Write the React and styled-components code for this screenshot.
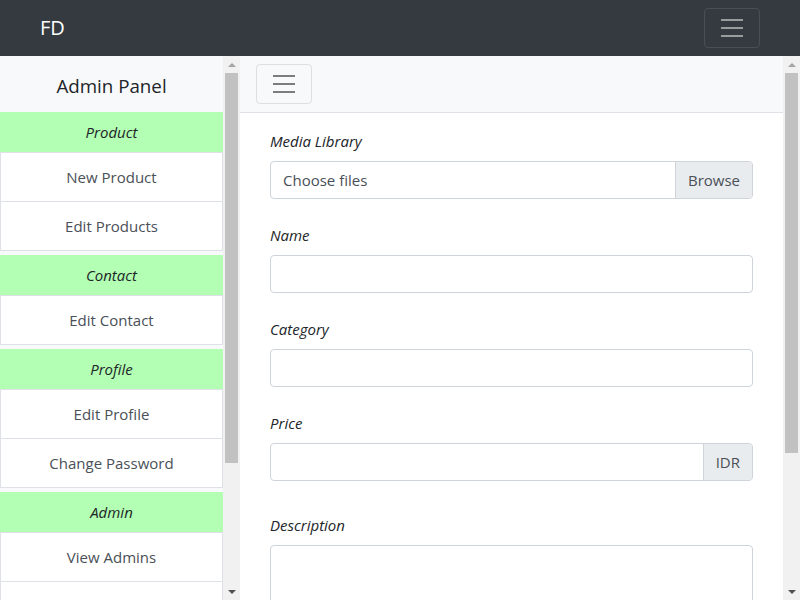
import React from "react";
import styled, { createGlobalStyle } from "styled-components";

const Global = createGlobalStyle`
  * { box-sizing: border-box; }
  html, body { margin: 0; padding: 0; height: 100%; }
  body {
    font-family: "Open Sans", "Noto Sans", sans-serif;
    font-size: 15px;
    line-height: 24px;
    color: #212529;
    background: #fff;
    overflow: hidden;
  }
`;

const Page = styled.div`
  display: flex;
  flex-direction: column;
  height: 100vh;
`;

const Navbar = styled.nav`
  height: 56px;
  flex: none;
  background: #343a40;
  display: flex;
  align-items: center;
  justify-content: space-between;
  padding: 0 40px;
`;

const Brand = styled.div`
  color: #fff;
  font-size: 20px;
  line-height: 30px;
`;

const Toggler = styled.button`
  width: 56px;
  height: 40px;
  padding: 0;
  display: flex;
  align-items: center;
  justify-content: center;
  background: transparent;
  border: 1px solid ${(p) => (p.$dark ? "rgba(255,255,255,0.1)" : "rgba(0,0,0,0.1)")};
  border-radius: 4px;
  color: ${(p) => (p.$dark ? "rgba(255,255,255,0.5)" : "rgba(0,0,0,0.5)")};
`;

const Body = styled.div`
  flex: 1;
  display: flex;
  min-height: 0;
`;

const Pane = styled.div`
  display: flex;
  min-height: 0;
  width: ${(p) => p.$width || "auto"};
  flex: ${(p) => (p.$width ? "none" : "1")};
  background: ${(p) => p.$bg || "#fff"};
`;

const PaneContent = styled.div`
  flex: 1;
  min-width: 0;
  overflow: hidden;
`;

/* fake classic scrollbar */
const ScrollBar = styled.div`
  width: 17px;
  flex: none;
  display: flex;
  flex-direction: column;
  background: #f1f1f1;
`;

const ScrollButton = styled.div`
  height: 17px;
  flex: none;
  display: flex;
  align-items: center;
  justify-content: center;
`;

const Arrow = styled.div`
  width: 0;
  height: 0;
  border-left: 4px solid transparent;
  border-right: 4px solid transparent;
  ${(p) =>
    p.$down
      ? `border-top: 4px solid #505050;`
      : `border-bottom: 4px solid #a3a3a3;`}
`;

const ScrollTrack = styled.div`
  flex: 1;
  padding: 0 2px;
`;

const Thumb = styled.div`
  background: #c1c1c1;
  width: 100%;
`;

const FakeScrollbar = ({ thumb }) => (
  <ScrollBar>
    <ScrollButton>
      <Arrow />
    </ScrollButton>
    <ScrollTrack>
      <Thumb style={{ height: thumb }} />
    </ScrollTrack>
    <ScrollButton>
      <Arrow $down />
    </ScrollButton>
  </ScrollBar>
);

const SideTitle = styled.div`
  height: 56px;
  padding-top: 3px;
  display: flex;
  align-items: center;
  justify-content: center;
  font-size: 18.75px;
  color: #212529;
`;

const Section = styled.div`
  margin-bottom: 4px;
`;

const SectionHeader = styled.div`
  height: 40px;
  background: #b3ffb3;
  display: flex;
  align-items: center;
  justify-content: center;
  font-style: italic;
  color: #212529;
`;

const SideItem = styled.div`
  height: ${(p) => (p.$last ? "50px" : "49px")};
  background: #fff;
  border: 1px solid #dee2e6;
  border-bottom: ${(p) => (p.$last ? "1px solid #dee2e6" : "none")};
  display: flex;
  align-items: center;
  justify-content: center;
  color: #495057;
`;

const MainBar = styled.div`
  height: 57px;
  background: #f8f9fa;
  border-bottom: 1px solid #dee2e6;
  display: flex;
  align-items: center;
  padding: 0 16px;
`;

const Form = styled.form`
  padding: 16px 30px 24px 30px;
`;

const Group = styled.div`
  margin-bottom: ${(p) => (p.$extra ? "32px" : "24px")};
`;

const Label = styled.label`
  display: block;
  font-style: italic;
  margin-bottom: 8px;
  height: 24px;
  color: #212529;
`;

const Field = styled.div`
  display: flex;
  height: 38px;
  border: 1px solid #ced4da;
  border-radius: 4px;
  background: #fff;
  overflow: hidden;
`;

const FieldText = styled.div`
  flex: 1;
  padding: 6px 12px;
  color: #495057;
`;

const Addon = styled.div`
  padding: 6px 12px;
  background: #e9ecef;
  border-left: 1px solid #ced4da;
  color: #495057;
`;

const TextArea = styled.div`
  height: 86px;
  border: 1px solid #ced4da;
  border-radius: 4px;
`;

const Submit = styled.div`
  display: inline-block;
  padding: 6px 12px;
  background: #28a745;
  color: #fff;
  border-radius: 4px;
`;

const Bars = () => (
  <svg width="30" height="30" viewBox="0 0 30 30">
    <path d="M4 7h22M4 15h22M4 23h22" stroke="currentColor" strokeWidth="2" />
  </svg>
);

const sections = [
  { title: "Product", items: ["New Product", "Edit Products"] },
  { title: "Contact", items: ["Edit Contact"] },
  { title: "Profile", items: ["Edit Profile", "Change Password"] },
  { title: "Admin", items: ["View Admins", "New Admin"] },
  { title: "Account", items: ["Logout"] },
];

export default function App() {
  return (
    <Page>
      <Global />
      <Navbar>
        <Brand>FD</Brand>
        <Toggler $dark>
          <Bars />
        </Toggler>
      </Navbar>
      <Body>
        <Pane $width="240px" $bg="#f8f9fa">
          <PaneContent>
            <SideTitle>Admin Panel</SideTitle>
            {sections.map((s) => (
              <Section key={s.title}>
                <SectionHeader>{s.title}</SectionHeader>
                {s.items.map((it, i) => (
                  <SideItem key={it} $last={i === s.items.length - 1}>
                    {it}
                  </SideItem>
                ))}
              </Section>
            ))}
          </PaneContent>
          <FakeScrollbar thumb={390} />
        </Pane>
        <Pane>
          <PaneContent>
            <MainBar>
              <Toggler>
                <Bars />
              </Toggler>
            </MainBar>
            <Form>
              <Group>
                <Label>Media Library</Label>
                <Field>
                  <FieldText>Choose files</FieldText>
                  <Addon>Browse</Addon>
                </Field>
              </Group>
              <Group>
                <Label>Name</Label>
                <Field>
                  <FieldText />
                </Field>
              </Group>
              <Group>
                <Label>Category</Label>
                <Field>
                  <FieldText />
                </Field>
              </Group>
              <Group $extra>
                <Label>Price</Label>
                <Field>
                  <FieldText />
                  <Addon>IDR</Addon>
                </Field>
              </Group>
              <Group>
                <Label>Description</Label>
                <TextArea />
              </Group>
              <Submit>Submit</Submit>
            </Form>
          </PaneContent>
          <FakeScrollbar thumb={380} />
        </Pane>
      </Body>
    </Page>
  );
}
